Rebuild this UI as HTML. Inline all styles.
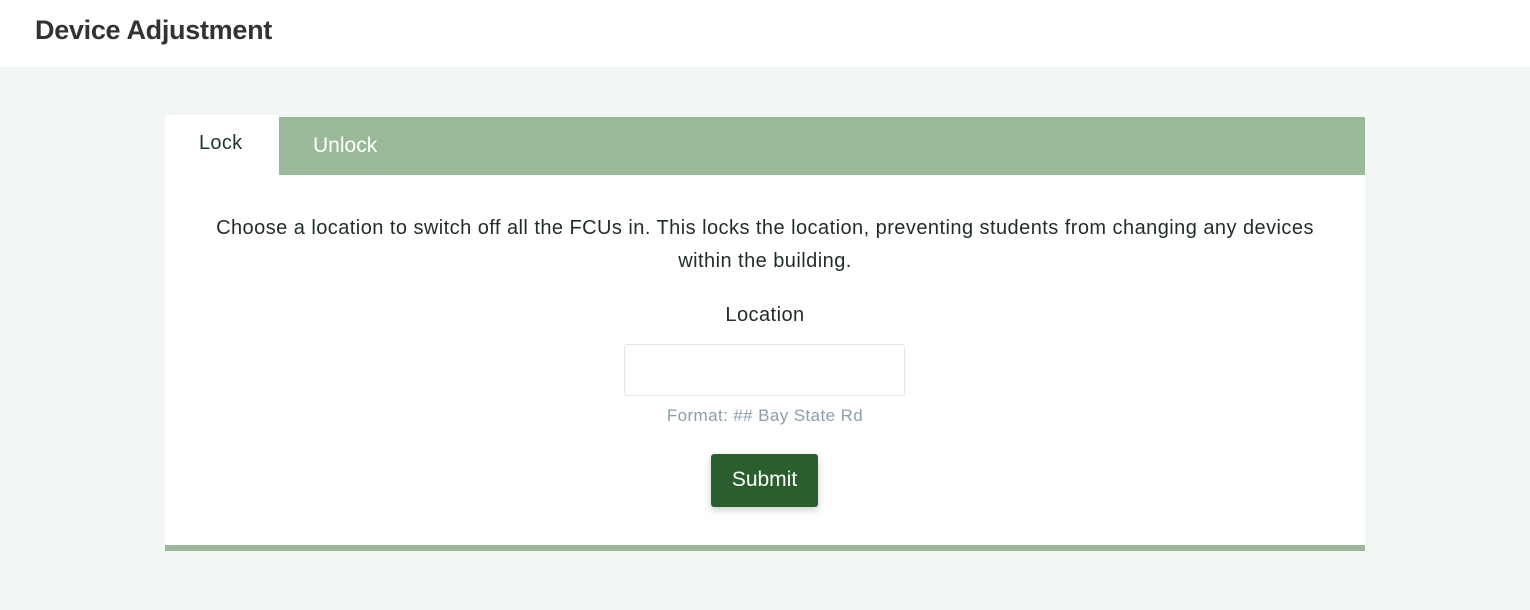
<!DOCTYPE html>
<html><head><style>
body{margin:0;width:1530px;height:610px;background:#f2f7f3;font-family:"Liberation Sans",sans-serif;overflow:hidden;position:relative}
.hdr{position:absolute;left:0;top:0;width:1530px;height:67px;background:#fff}
.hdr h1{position:absolute;left:35px;top:15px;margin:0;font-size:27px;font-weight:bold;color:#333;letter-spacing:-0.3px}
.bar{position:absolute;left:279px;top:117px;width:1086px;height:58px;background:#9ab998}
.tab{position:absolute;left:165px;top:115px;width:114px;height:60px;background:#fff}
.t1{position:absolute;left:199px;top:132px;font-size:20px;color:#1f3a2a;letter-spacing:0.3px}
.t2{position:absolute;left:313px;top:134px;font-size:21px;color:#fff}
.panel{position:absolute;left:165px;top:175px;width:1200px;height:370px;background:#fff}
.bot{position:absolute;left:165px;top:545px;width:1200px;height:6px;background:#9ab998}
.p{position:absolute;left:165px;width:1200px;text-align:center;font-size:20px;color:#1f2d24;line-height:33px;letter-spacing:0.45px}
.inp{position:absolute;left:624px;top:344px;width:279px;height:50px;border:1px solid #e3e6e8;border-radius:3px;background:#fff}
.fmt{position:absolute;left:165px;width:1200px;top:406px;text-align:center;font-size:17px;color:#8c9ea8;letter-spacing:0.4px}
.btn{position:absolute;left:711px;top:454px;width:107px;height:53px;background:#2b5e2e;border-radius:3px;color:#fff;font-size:21px;text-align:center;line-height:52px;box-shadow:0 3px 8px rgba(0,0,0,.2)}
</style></head><body>
<div class="hdr"><h1>Device Adjustment</h1></div>
<div class="bar"></div><div class="tab"></div>
<div class="t1">Lock</div><div class="t2">Unlock</div>
<div class="panel"></div><div class="bot"></div>
<div class="p" style="top:212px">Choose a location to switch off all the FCUs in. This locks the location, preventing students from changing any devices<br>within the building.</div>
<div class="p" style="top:299px">Location</div>
<div class="inp"></div>
<div class="fmt">Format: ## Bay State Rd</div>
<div class="btn">Submit</div>
</body></html>
